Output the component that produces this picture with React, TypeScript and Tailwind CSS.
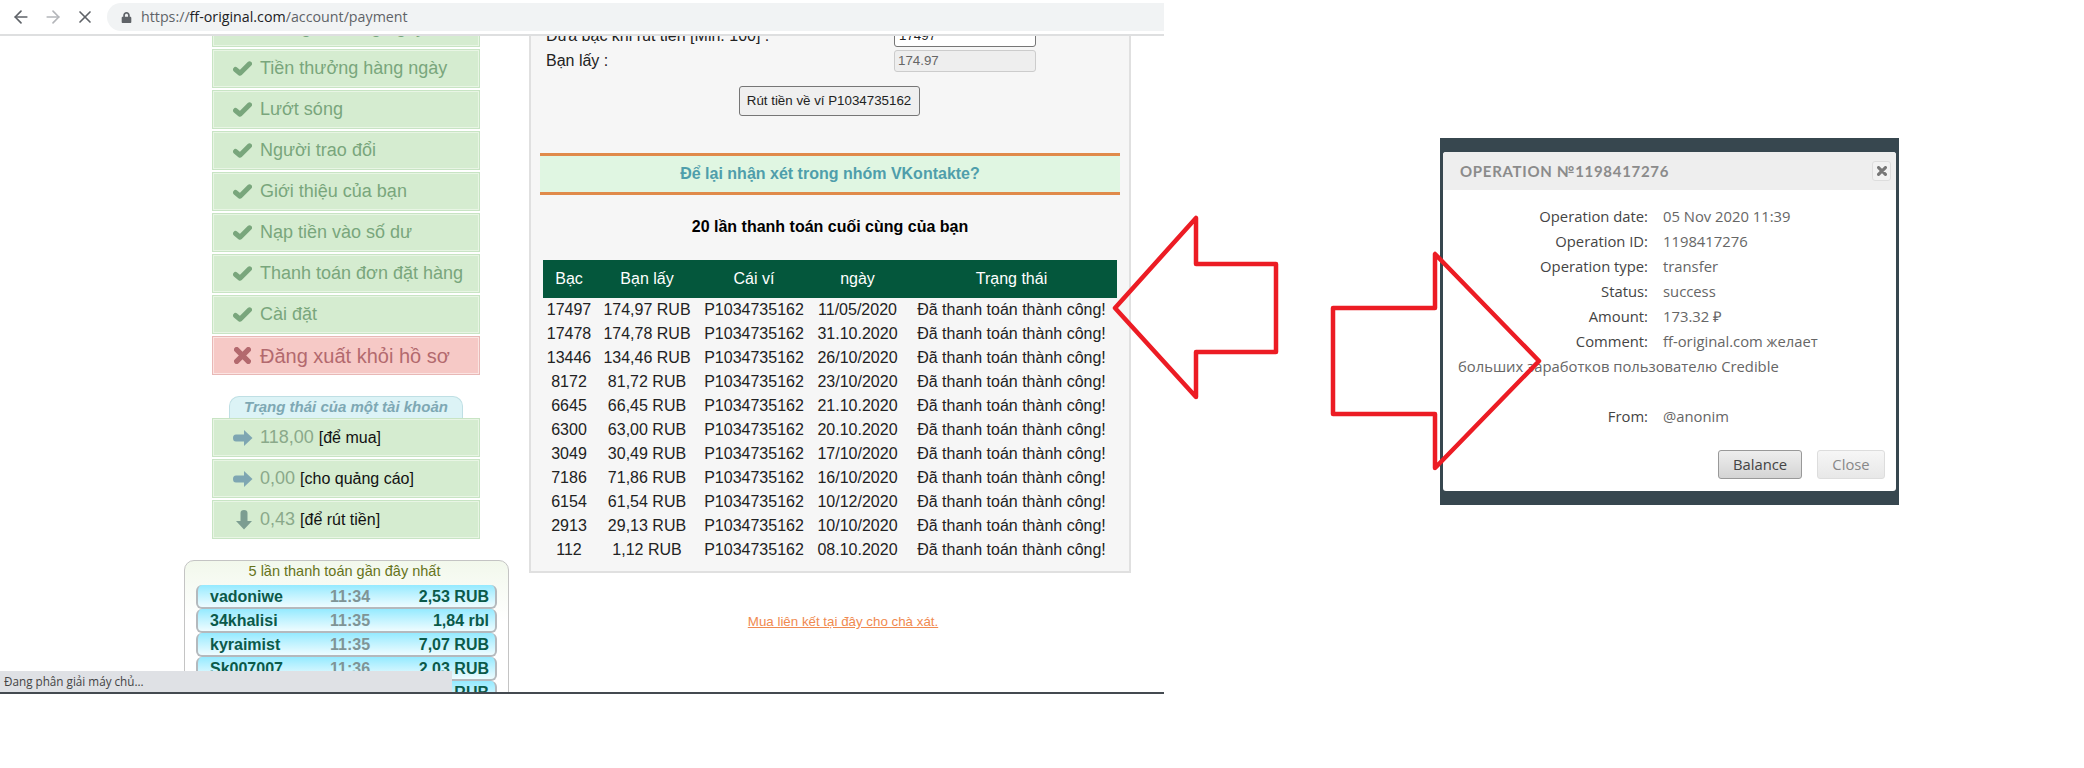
import { ArrowLeft, ArrowRight, X } from "lucide-react";
import { FaLock } from "react-icons/fa";

const menu = [
  "Thống kê trong ngày",
  "Tiền thưởng hàng ngày",
  "Lướt sóng",
  "Người trao đổi",
  "Giới thiệu của bạn",
  "Nạp tiền vào số dư",
  "Thanh toán đơn đặt hàng",
  "Cài đặt",
];

const rows = [
  ["17497", "174,97 RUB", "11/05/2020"],
  ["17478", "174,78 RUB", "31.10.2020"],
  ["13446", "134,46 RUB", "26/10/2020"],
  ["8172", "81,72 RUB", "23/10/2020"],
  ["6645", "66,45 RUB", "21.10.2020"],
  ["6300", "63,00 RUB", "20.10.2020"],
  ["3049", "30,49 RUB", "17/10/2020"],
  ["7186", "71,86 RUB", "16/10/2020"],
  ["6154", "61,54 RUB", "10/12/2020"],
  ["2913", "29,13 RUB", "10/10/2020"],
  ["112", "1,12 RUB", "08.10.2020"],
];

const payments = [
  ["vadoniwe", "11:34", "2,53 RUB"],
  ["34khalisi", "11:35", "1,84 rbl"],
  ["kyraimist", "11:35", "7,07 RUB"],
  ["Sk007007", "11:36", "2,03 RUB"],
  ["belkin", "11:36", "1,20 RUB"],
];

const details: [string, string][] = [
  ["Operation date:", "05 Nov 2020 11:39"],
  ["Operation ID:", "1198417276"],
  ["Operation type:", "transfer"],
  ["Status:", "success"],
  ["Amount:", "173.32 ₽"],
];

function FatCheck() {
  return (
    <svg width="19" height="15" viewBox="0 0 19 15" fill="none" className="mr-[8px] shrink-0">
      <path d="M2.5 8.5 L7 12.2 L16.5 2.8" stroke="#79a67c" strokeWidth="5" strokeLinecap="round" strokeLinejoin="round" />
    </svg>
  );
}

function FatCross({ size, width, color }: { size: number; width: number; color: string }) {
  const a = width / 2;
  const b = 16 - width / 2;
  return (
    <svg width={size} height={size} viewBox="0 0 16 16" fill="none" className="shrink-0">
      <path d={`M${a} ${a} L${b} ${b} M${b} ${a} L${a} ${b}`} stroke={color} strokeWidth={width} strokeLinecap="round" />
    </svg>
  );
}

function FatRight() {
  return (
    <svg width="20" height="16" viewBox="0 0 20 16" className="shrink-0">
      <path d="M11 0 L19.5 8 L11 16 L11 11.5 L3 11.5 Q0 11.5 0 8 Q0 4.5 3 4.5 L11 4.5 Z" fill="#7ea6b2" />
    </svg>
  );
}

function FatDown() {
  return (
    <svg width="16" height="20" viewBox="0 0 16 20" className="shrink-0">
      <path d="M0 11 L8 19.5 L16 11 L11.5 11 L11.5 3 Q11.5 0 8 0 Q4.5 0 4.5 3 L4.5 11 Z" fill="#7c9d91" />
    </svg>
  );
}

function Card({ children, tone = "green" }: { children: React.ReactNode; tone?: "green" | "red" }) {
  const skin =
    tone === "red"
      ? "bg-[#f6c9c6] border-[#e8b8b6] shadow-[inset_0_0_0_1px_#fbe4e2]"
      : "bg-[#d5ecd0] border-[#c8e4c4] shadow-[inset_0_0_0_1px_#e8f5e4]";
  return <div className={`mb-[2px] flex h-[39px] items-center border pl-[20px] ${skin}`}>{children}</div>;
}

function Sidebar() {
  return (
    <div className="-mt-[28px] ml-[184px] w-[325px] shrink-0">
      <div className="mx-[28px] w-[268px]">
        {menu.map((m) => (
          <Card key={m}>
            <FatCheck />
            <span className="whitespace-nowrap text-[18px] text-[#79a67c]">{m}</span>
          </Card>
        ))}
        <Card tone="red">
          <span className="ml-[1px] mr-[9px]">
            <FatCross size={17} width={5} color="#b3696e" />
          </span>
          <span className="whitespace-nowrap text-[20px] text-[#b3696e]">Đăng xuất khỏi hồ sơ</span>
        </Card>

        <div className="mx-[17px] mt-[21px] flex h-[22px] items-center justify-center rounded-t-[10px] border border-b-0 border-[#bfdfe4] bg-[#dcf3f6] text-[15px] font-bold italic text-[#7ea8b4]">
          Trạng thái của một tài khoản
        </div>
        <Card>
          <span className="mr-[7px]"><FatRight /></span>
          <span className="whitespace-nowrap text-[18px] text-[#8aa98a]">118,00</span>
          <span className="ml-[5px] whitespace-nowrap text-[16px] text-[#111]">[để mua]</span>
        </Card>
        <Card>
          <span className="mr-[7px]"><FatRight /></span>
          <span className="whitespace-nowrap text-[18px] text-[#8aa98a]">0,00</span>
          <span className="ml-[5px] whitespace-nowrap text-[16px] text-[#111]">[cho quảng cáo]</span>
        </Card>
        <Card>
          <span className="ml-[3px] mr-[8px]"><FatDown /></span>
          <span className="whitespace-nowrap text-[18px] text-[#8aa98a]">0,43</span>
          <span className="ml-[5px] whitespace-nowrap text-[16px] text-[#111]">[để rút tiền]</span>
        </Card>
      </div>

      <div className="mt-[21px] rounded-[10px] border border-[#c4c4c4] bg-gradient-to-b from-[#f2f8ec] to-white to-[60px] px-[11px] pb-[10px]">
        <div className="flex h-[24px] items-center justify-center pb-[2px] pr-[4px] text-[14.5px] text-[#66731a]">
          5 lần thanh toán gần đây nhất
        </div>
        {payments.map(([name, time, amount]) => (
          <div
            key={name}
            className="flex h-[24px] items-center rounded-[6px] border-x-2 border-b-2 border-[#b4b9bd] bg-gradient-to-b from-[#94eaff] to-[#eefcff] pl-[12px] pr-[6px] pt-[2px] text-[16px] font-bold text-[#0b5a4a]"
          >
            <span className="w-[120px]">{name}</span>
            <span className="w-[60px] text-[#7f9496]">{time}</span>
            <span className="flex-1 text-right">{amount}</span>
          </div>
        ))}
      </div>
    </div>
  );
}

function MainPanel() {
  const th = "font-normal";
  return (
    <div className="ml-[20px] w-[602px] shrink-0">
      <div className="-mt-[24px] border-2 border-[#e0e0e0] bg-[#f6f6f6] pb-[9px] pt-[11px]">
        <div className="flex h-[24px] items-center pb-[3px] pl-[15px] text-[16px] text-[#222]">
          <span className="w-[348px] whitespace-nowrap">Đưa bạc khi rút tiền [Min. 100] :</span>
          <div className="flex h-[22px] w-[142px] items-center rounded-[3px] border border-[#767676] bg-white pl-[4px] text-[13.33px]">
            17497
          </div>
        </div>
        <div className="flex h-[24px] items-center pl-[15px] text-[16px] text-[#222]">
          <span className="w-[348px] whitespace-nowrap">Bạn lấy :</span>
          <div className="flex h-[22px] w-[142px] items-center rounded-[3px] border border-[#ccc] bg-[#eee] pl-[3px] text-[13.33px] text-[#666]">
            174.97
          </div>
        </div>
        <div className="mt-[13px] flex justify-center pr-[2px]">
          <button className="h-[30px] w-[181px] rounded-[3px] border border-[#767676] bg-[#efefef] text-[13.33px] text-[#222]">
            Rút tiền về ví P1034735162
          </button>
        </div>
        <div className="mx-[9px] mt-[37px] flex h-[42px] items-center justify-center border-y-[3px] border-[#e08a4a] bg-[#e0f6e2] text-[16px] font-bold text-[#4f9eab]">
          Để lại nhận xét trong nhóm VKontakte?
        </div>
        <div className="mt-[21px] flex h-[22px] items-center justify-center text-[16px] font-bold text-black">
          20 lần thanh toán cuối cùng của bạn
        </div>
        <table className="ml-[12px] mt-[22px] w-[574px] table-fixed border-collapse text-center text-[16px] text-[#222]">
          <colgroup>
            <col className="w-[52px]" />
            <col className="w-[104px]" />
            <col className="w-[110px]" />
            <col className="w-[97px]" />
            <col />
          </colgroup>
          <thead>
            <tr className="h-[38px] bg-[#04573c] text-white">
              <th className={th}>Bạc</th>
              <th className={th}>Bạn lấy</th>
              <th className={th}>Cái ví</th>
              <th className={th}>ngày</th>
              <th className={th}>Trạng thái</th>
            </tr>
          </thead>
          <tbody>
            {rows.map((r) => (
              <tr key={r[0]} className="h-[24px]">
                <td>{r[0]}</td>
                <td className="whitespace-nowrap">{r[1]}</td>
                <td>P1034735162</td>
                <td>{r[2]}</td>
                <td className="whitespace-nowrap">Đã thanh toán thành công!</td>
              </tr>
            ))}
          </tbody>
        </table>
      </div>
      <div className="mt-[40px] pl-[26px] text-center text-[13.33px] leading-[18px] text-[#f08a50] underline">
        Mua liên kết tại đây cho chà xát.
      </div>
    </div>
  );
}

function Browser() {
  return (
    <div className="relative w-[1164px] shrink-0">
      <div className="flex h-[36px] items-center border-b-2 border-[#dedfe0] bg-white pl-[11px]">
        <ArrowLeft className="h-[20px] w-[20px] text-[#5f6368]" strokeWidth={2} />
        <ArrowRight className="ml-[12px] h-[20px] w-[20px] text-[#b4b6ba]" strokeWidth={2} />
        <X className="ml-[12px] h-[20px] w-[20px] text-[#5f6368]" strokeWidth={2} />
        <div className="ml-[12px] flex h-[28px] flex-1 items-center rounded-l-full bg-[#f1f3f4] pl-[14px] font-['Open_Sans',sans-serif] text-[14.25px] text-[#5f6368]">
          <FaLock className="mr-[9px] h-[11px] w-[11px] text-[#5f6368]" />
          https://<span className="text-[#202124]">ff-original.com</span>/account/payment
        </div>
      </div>
      <div className="flex h-[658px] overflow-hidden border-b-2 border-[#444a50] bg-white">
        <Sidebar />
        <MainPanel />
      </div>
      <div className="absolute bottom-[2px] left-0 flex h-[21px] w-[452px] items-center bg-[#dfe1e5] pl-[4px] font-['Open_Sans',sans-serif] text-[11.7px] text-[#444]">
        Đang phân giải máy chủ...
      </div>
    </div>
  );
}

function Dialog() {
  return (
    <div className="ml-[276px] mt-[138px] w-[459px] shrink-0 bg-[#37474f] px-[3px] pb-[14px] pt-[14px] font-['Open_Sans',sans-serif]">
      <div className="h-[339px] rounded-[3px] bg-white">
        <div className="flex h-[38px] items-center justify-between rounded-t-[3px] bg-[#eeeeee] pl-[17px] pr-[5px]">
          <span className="font-['Lato',sans-serif] text-[15px] font-bold tracking-[0.7px] text-[#8b8b8b]">
            OPERATION №1198417276
          </span>
          <span className="flex h-[20px] w-[19px] items-center justify-center rounded-[3px] border border-[#ddd] bg-[#f2f2f2]">
            <FatCross size={10} width={5} color="#777" />
          </span>
        </div>
        <div className="pl-[15px] pt-[14px] text-[14.8px] leading-[25px] text-[#666]">
          {details.map(([k, v]) => (
            <div key={k} className="flex">
              <span className="w-[190px] text-right text-[#444]">{k}</span>
              <span className="ml-[15px]">{v}</span>
            </div>
          ))}
          <div>
            <span className="inline-block w-[190px] text-right text-[#444]">Comment:</span>
            <span className="ml-[15px]">ff-original.com желает</span>
            <br />
            больших заработков пользователю Credible
            <br />
            <br />
            <span className="inline-block w-[190px] text-right text-[#444]">From:</span>
            <span className="ml-[15px]">@anonim</span>
          </div>
        </div>
        <div className="mr-[11px] mt-[21px] flex justify-end gap-[15px] text-[14.8px]">
          <button className="h-[29px] w-[84px] rounded-[3px] border border-[#999] bg-gradient-to-b from-[#eeeeee] to-[#d4d4d4] text-[#444]">
            Balance
          </button>
          <button className="h-[29px] w-[68px] rounded-[3px] border border-[#ddd] bg-gradient-to-b from-[#f6f6f6] to-[#e8e8e8] text-[#888]">
            Close
          </button>
        </div>
      </div>
    </div>
  );
}

export default function App() {
  return (
    <div className="relative flex min-h-[768px] items-start bg-white font-['Liberation_Sans',Arial,sans-serif]">
      <Browser />
      <Dialog />
      <svg className="pointer-events-none absolute left-0 top-0" width="2084" height="768" fill="none">
        <path d="M1115 308 L1196 218 V264 H1276 V352 H1196 V397 Z" stroke="#ec1c24" strokeWidth="4.5" strokeLinejoin="round" />
        <path d="M1539 361 L1435 254 V308 H1333 V414 H1435 V468 Z" stroke="#ec1c24" strokeWidth="4.5" strokeLinejoin="round" />
      </svg>
    </div>
  );
}
